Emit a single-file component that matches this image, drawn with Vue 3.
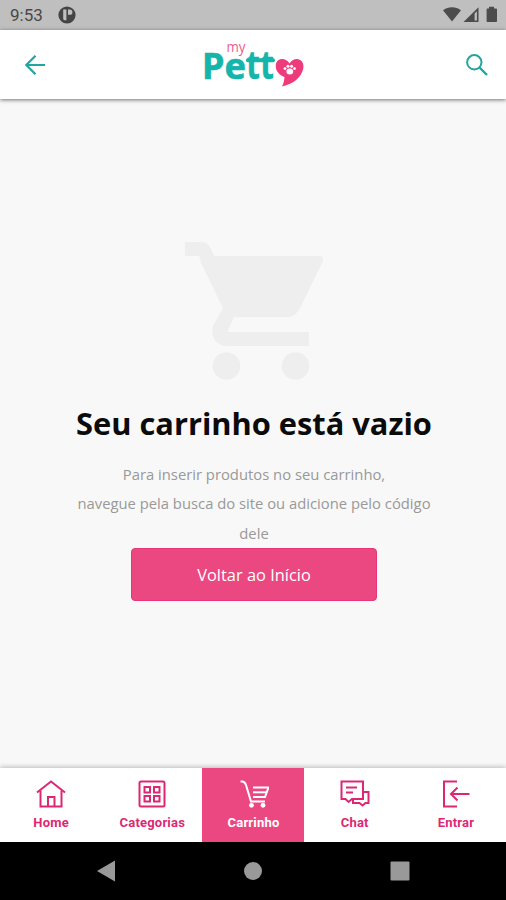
<template>
  <div class="app">
    <div class="status-bar">
      <span class="clock">9:53</span>
      <svg class="status-app" width="18" height="18" viewBox="0 0 18 18">
        <circle cx="9" cy="9" r="8.6" fill="#444" />
        <path d="M5.2 3.6h3.2v10.6H6.6c-.8 0-1.4-.6-1.4-1.4zM10 3.6h1.8a2.6 2.6 0 0 1 0 5.2H10z" fill="#bfbfbf" />
      </svg>
      <div class="status-icons">
        <svg width="56" height="18" viewBox="0 0 56 18" fill="#4c4c4c">
          <path d="M1 4.2C6 .2 14 .2 19 4.2L10 15.5z" />
          <path d="M36.500 1.200V16H21.500zM32.600 7.600V14.600H34.900V5.300z" fill-rule="evenodd" />
          <path d="M47 .8h5v1.800h2.200q.8 0 .8.800V15.200q0 .8-.8.800h-8.800q-.8 0-.8-.8V3.400q0-.8.800-.8H47z" />
        </svg>
      </div>
    </div>

    <header class="header">
      <button class="icon-btn" aria-label="Voltar">
        <svg width="20" height="20" viewBox="0 0 20 20" fill="none" stroke="#21a5a0" stroke-width="2.200">
          <path d="M20 10H2M10.500 .8L1.300 10l9.200 9.200" />
        </svg>
      </button>
      <svg class="logo" width="104" height="56" viewBox="0 0 104 56">
        <text class="logo-my" x="24.500" y="15" textLength="19" lengthAdjust="spacingAndGlyphs">my</text>
        <text class="logo-name" x="0" y="41.500" textLength="44" lengthAdjust="spacingAndGlyphs">Pe</text>
        <text class="logo-name logo-tt" x="44" y="41.500" textLength="28" lengthAdjust="spacingAndGlyphs">tt</text>
        <path d="M46 23.300H71" stroke="#15b5ac" stroke-width="4" stroke-linecap="round" />
        <path d="M87.500 26.500C84 20 74.500 20.500 73.800 28c-.5 6 3.700 10 8.700 12-.2 3-.7 6-2.500 9.500C92 47 99.500 40 101.300 31.500 103 21.500 92.500 18.500 87.500 26.500z" fill="#ee3b7c" />
        <g fill="#fff">
          <ellipse cx="87.800" cy="34.500" rx="3.400" ry="2.900" />
          <circle cx="83" cy="31.600" r="1.400" />
          <circle cx="86" cy="29.200" r="1.500" />
          <circle cx="89.600" cy="29.200" r="1.500" />
          <circle cx="92.500" cy="31.600" r="1.400" />
        </g>
      </svg>
      <button class="icon-btn" aria-label="Buscar">
        <svg width="22" height="22" viewBox="0 0 22 22" fill="none" stroke="#21a5a0" stroke-width="2">
          <circle cx="8.300" cy="8.300" r="7.200" />
          <path d="M13.500 13.500L21 21" stroke-width="2.400" />
        </svg>
      </button>
    </header>

    <main class="content">
      <svg class="empty-cart" width="139" height="139" viewBox="0 0 139 139" fill="#eee">
        <path d="M0 0H17C23 0 26 6 29.300 14H135Q138.500 15 138 19L116 64Q111 75 103 75.300H49L43 88V90H122Q124 90 124 92V104H41C30 103 25 93 28 84L38 66 16 21 14.300 14H0z" />
        <circle cx="41.500" cy="124" r="13.800" />
        <circle cx="110.500" cy="124" r="13.800" />
      </svg>
      <h1 class="title">Seu carrinho está vazio</h1>
      <p class="message">
        Para inserir produtos no seu carrinho,<br />
        navegue pela busca do site ou adicione pelo código<br />
        dele
      </p>
      <button class="back-btn">Voltar ao Início</button>
    </main>

    <nav class="tabs">
      <div
        v-for="tab in tabs"
        :key="tab.id"
        class="tab"
        :class="{ active: tab.id === activeTab }"
        @click="activeTab = tab.id"
      >
        <svg width="30" height="28" viewBox="0 0 30 28" fill="none" stroke="currentColor" stroke-width="2">
          <path v-for="d in tab.paths" :key="d" :d="d" />
          <template v-if="tab.id === 'cart'">
            <circle cx="12.500" cy="25.300" r="2.400" fill="currentColor" stroke="none" />
            <circle cx="24" cy="25.300" r="2.400" fill="currentColor" stroke="none" />
          </template>
        </svg>
        <span class="tab-label">{{ tab.label }}</span>
      </div>
    </nav>

    <div class="system-nav">
      <svg width="18" height="22" viewBox="0 0 18 22"><path d="M18 .5v21L0 11z" /></svg>
      <svg width="18" height="22" viewBox="0 0 18 22"><circle cx="9" cy="11" r="9" /></svg>
      <svg width="20" height="22" viewBox="0 0 20 22"><rect x=".5" y="1.500" width="19" height="19" rx="1" /></svg>
    </div>
  </div>
</template>

<script setup>
import { ref } from "vue";

const activeTab = ref("cart");

const tabs = [
  {
    id: "home",
    label: "Home",
    paths: ["M1 12.500L15 1.500l14 11", "M4.500 10.500V26.500H25.500V10.500", "M12 26.500V17h6.500v9.500"],
  },
  {
    id: "categories",
    label: "Categorias",
    paths: [
      "M4 1.500H26Q27.500 1.500 27.500 3V25Q27.500 26.500 26 26.500H4Q2.500 26.500 2.500 25V3Q2.500 1.500 4 1.500z",
      "M7.500 7h5.500v5.500h-5.500zM17 7h5.500v5.500h-5.500zM7.500 16h5.500v5.500h-5.500zM17 16h5.500v5.500h-5.500z",
    ],
  },
  {
    id: "cart",
    label: "Carrinho",
    paths: ["M1.500 1.500H3.500Q6 2 7 5L12 21.500H26", "M14 7.500H29.500L26 17H14", "M14 12.300H27.500"],
  },
  {
    id: "chat",
    label: "Chat",
    paths: ["M1.500 1.500H23V19H12L8.500 22 5.500 19H1.500z", "M6 7.500H17M6 12.500H13", "M23 12H28.500V23H25.500L22.500 25.500 19.500 23H13V19"],
  },
  {
    id: "login",
    label: "Entrar",
    paths: ["M16 1.500H3V26.500H16", "M28.500 14H10M16.500 7.500L10 14l6.500 6.500"],
  },
];
</script>

<style>
body {
  margin: 0;
}
</style>

<style scoped>
.app {
  width: 506px;
  height: 900px;
  display: flex;
  flex-direction: column;
  background: #f8f8f8;
  font-family: "Open Sans", sans-serif;
  overflow: hidden;
}

.status-bar {
  height: 30px;
  flex-shrink: 0;
  box-sizing: border-box;
  display: flex;
  align-items: center;
  padding: 0 8px 0 10px;
  background: #bfbfbf;
}

.clock {
  width: 48px;
  font-family: Roboto, sans-serif;
  font-size: 17px;
  color: #484848;
}

.status-icons {
  display: flex;
  margin-left: auto;
}

.header {
  height: 69px;
  flex-shrink: 0;
  box-sizing: border-box;
  display: flex;
  align-items: center;
  justify-content: space-between;
  padding: 0 18px 0 25px;
  background: #fff;
  box-shadow: 0 1px 4px rgba(0, 0, 0, 0.55);
  z-index: 1;
}

.icon-btn {
  display: flex;
  padding: 0;
  border: 0;
  background: none;
  cursor: pointer;
}

.logo {
  margin-right: 3px;
  overflow: visible;
}

.logo-my {
  font: 14px "Open Sans", sans-serif;
  fill: #ee5a8f;
}

.logo-name {
  font: 700 36px "Noto Sans", sans-serif;
  fill: #15b5ac;
  stroke: #15b5ac;
  stroke-width: 0.6;
  stroke-linejoin: round;
}

.logo-tt {
  font-size: 39px;
  stroke-width: 0.3;
}

.content {
  flex: 1;
  display: flex;
  flex-direction: column;
  align-items: center;
  padding: 143px 0 0 2px;
}

.title {
  margin: 20px 0 0;
  font-size: 30.8px;
  line-height: 44px;
  font-weight: 700;
  color: #0b0b0b;
  white-space: nowrap;
}

.message {
  margin: 15px 0 0;
  font-size: 14.8px;
  line-height: 29.3px;
  text-align: center;
  color: #999;
  white-space: nowrap;
}

.back-btn {
  width: 246px;
  height: 53px;
  border: 1px solid #e63678;
  border-radius: 4px;
  background: #eb4882;
  color: #fff;
  font: 16.4px "Open Sans", sans-serif;
  cursor: pointer;
}

.tabs {
  height: 74px;
  flex-shrink: 0;
  display: flex;
  background: #fff;
  box-shadow: 0 -1px 5px rgba(0, 0, 0, 0.25);
}

.tab {
  flex: 1;
  display: flex;
  flex-direction: column;
  align-items: center;
  padding: 12px 0 0 1px;
  color: #dc2874;
  cursor: pointer;
}

.tab.active {
  background: #eb4882;
  color: #fff;
}

.tab-label {
  margin-top: 7px;
  font-family: Roboto, sans-serif;
  font-size: 13px;
  line-height: 16px;
  font-weight: 700;
  letter-spacing: 0.2px;
}

.system-nav {
  height: 58px;
  flex-shrink: 0;
  box-sizing: border-box;
  display: flex;
  align-items: center;
  justify-content: space-between;
  padding: 0 96px 0 97px;
  background: #000;
  fill: #999;
}
</style>
